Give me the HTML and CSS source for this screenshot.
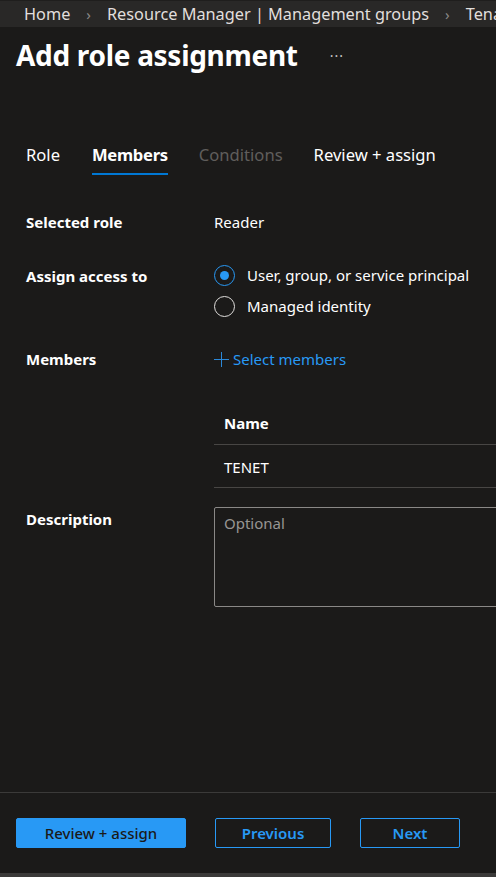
FILE: index.html
```html
<!DOCTYPE html>
<html lang="en">

<head>
    <meta charset="UTF-8">
    <title>Add role assignment</title>
    <link rel="stylesheet" href="styles.css">
</head>

<body>
    <div class="blade">
        <div class="crumbs">
            <span>Home</span>
            <span class="chev">&#x203A;</span>
            <span>Resource Manager | Management groups</span>
            <span class="chev">&#x203A;</span>
            <span>Tenant Root Group</span>
        </div>

        <div class="head">
            <h1>Add role assignment</h1>
            <span class="more">&middot;&middot;&middot;</span>
        </div>

        <div class="tabs">
            <a>Role</a>
            <a class="active">Members</a>
            <a class="off">Conditions</a>
            <a>Review + assign</a>
        </div>

        <div class="form">
            <div class="row r-role">
                <div class="lbl">Selected role</div>
                <div class="val">Reader</div>
            </div>

            <div class="row r-access">
                <div class="lbl">Assign access to</div>
                <div class="val">
                    <label class="radio checked"><i></i>User, group, or service principal</label>
                    <label class="radio"><i></i>Managed identity</label>
                </div>
            </div>

            <div class="row r-members">
                <div class="lbl">Members</div>
                <div class="val">
                    <a class="add">
                        <svg width="15" height="15" viewBox="0 0 15 15"><path d="M7.5 0v15M0 7.5h15" stroke="#2b88d8" stroke-width="1" fill="none"/></svg>
                        Select members
                    </a>
                    <div class="grid">
                        <div class="th">Name</div>
                        <div class="td">TENET</div>
                    </div>
                </div>
            </div>

            <div class="row r-desc">
                <div class="lbl">Description</div>
                <div class="val">
                    <div class="area">Optional</div>
                </div>
            </div>
        </div>

        <div class="foot">
            <button class="btn primary">Review + assign</button>
            <button class="btn">Previous</button>
            <button class="btn next">Next</button>
        </div>
        <div class="edge"></div>
    </div>
</body>

</html>
```

FILE: styles.css
```css
* {
    margin: 0;
    padding: 0;
    box-sizing: border-box;
}

body {
    background: #1b1a19;
    color: #fff;
    font-family: "Noto Sans", "Open Sans", sans-serif;
    overflow: hidden;
}

.blade {
    height: 877px;
    display: flex;
    flex-direction: column;
}

/* breadcrumb */
.crumbs {
    height: 27px;
    background: #292827;
    border-top: 1px solid #1f1e1d;
    padding-left: 24px;
    display: flex;
    align-items: center;
    gap: 16px;
    font-size: 16.3px;
    color: #e1dfdd;
    white-space: nowrap;
    overflow: hidden;
}

.crumbs .chev {
    color: #8a8886;
    font-size: 15px;
}

.head {
    display: flex;
    align-items: center;
    padding: 10px 0 0 16px;
}

.head h1 {
    font-size: 28px;
    font-weight: 700;
    line-height: 36px;
    letter-spacing: -0.3px;
}

.head .more {
    margin-left: 32px;
    font-size: 14px;
    color: #c8c6c4;
    letter-spacing: 1px;
}

/* tabs */
.tabs {
    display: flex;
    gap: 31px;
    padding: 70px 0 0 26px;
}

.tabs a {
    font-size: 16.6px;
    line-height: 24px;
    padding-bottom: 6px;
    border-bottom: 2px solid transparent;
    color: #fff;
}

.tabs a:first-child {
    margin-right: 1px;
}

.tabs a.active {
    font-weight: 700;
    border-bottom-color: #0078d4;
    letter-spacing: -0.3px;
}

.tabs a.off {
    color: #605e5c;
}

/* form */
.form {
    flex: 1;
    padding: 37px 0 0 26px;
}

.row {
    display: flex;
    font-size: 15px;
    line-height: 20px;
}

.lbl {
    width: 188px;
    flex-shrink: 0;
    font-weight: 700;
}

.val {
    flex: 1;
    min-width: 320px;
}

.r-access {
    margin-top: 34px;
}

.radio {
    display: flex;
    align-items: center;
    height: 20px;
    margin-bottom: 12px;
    margin-top: -1px;
}

.radio i {
    width: 21px;
    height: 21px;
    border-radius: 50%;
    border: 1px solid #e1dfdd;
    margin-right: 12px;
    position: relative;
}

.radio.checked i {
    border-color: #2899f5;
}

.radio.checked i::after {
    content: "";
    position: absolute;
    left: 5px;
    top: 5px;
    width: 9px;
    height: 9px;
    border-radius: 50%;
    background: #2899f5;
}

.r-members {
    margin-top: 21px;
}

.add {
    display: flex;
    align-items: center;
    gap: 4px;
    color: #2899f5;
}

.grid {
    margin-top: 36px;
    width: 320px;
}

.grid .th,
.grid .td {
    padding: 0 10px;
    border-bottom: 1px solid #484644;
}

.grid .th {
    font-weight: 700;
    padding-top: 8px;
    height: 40px;
}

.grid .td {
    padding-top: 12px;
    height: 43px;
}

.r-desc {
    margin-top: 21px;
}

.area {
    margin-top: -2px;
    width: 320px;
    height: 100px;
    border: 1px solid #8a8886;
    border-radius: 2px;
    padding: 5px 9px;
    color: #979593;
}

/* footer */
.foot {
    border-top: 1px solid #3b3a39;
    height: 81px;
    display: flex;
    gap: 29px;
    padding: 25px 0 0 16px;
}

.btn {
    height: 30px;
    font-family: inherit;
    font-size: 15px;
    font-weight: 600;
    border-radius: 2px;
    background: transparent;
    color: #2899f5;
    border: 1px solid #2899f5;
    width: 116px;
}

.btn.primary {
    width: 170px;
    background: #2899f5;
    color: #1b1a19;
    font-weight: 500;
}

.btn.next {
    width: 100px;
}

.edge {
    height: 4px;
    background: #3b3a39;
}
```
